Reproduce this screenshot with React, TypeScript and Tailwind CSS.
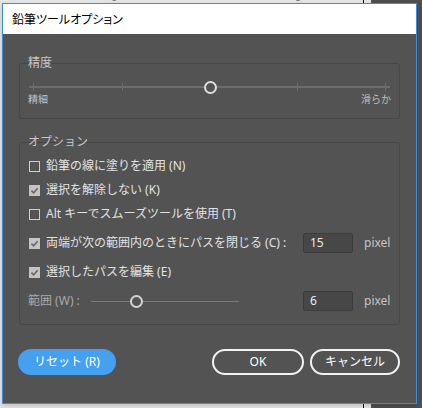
import React from "react";

function Check({ checked }: { checked: boolean }) {
  return checked ? (
    <span className="w-[11px] h-[11px] bg-[#c4c4c4] flex items-center justify-center shrink-0">
      <svg width="9" height="9" viewBox="0 0 9 9">
        <path d="M1.4 4.6 L3.6 6.8 L7.7 2.2" stroke="#6a6a6a" strokeWidth="1.7" fill="none" />
      </svg>
    </span>
  ) : (
    <span className="w-[11px] h-[11px] border border-[#cfcfcf] shrink-0" />
  );
}

function Row({ checked, label }: { checked: boolean; label: string }) {
  return (
    <div className="h-[24px] flex items-center pl-[9px] gap-[6px]">
      <Check checked={checked} />
      <span className="text-[12px] leading-[16px] text-[#e2e2e2] whitespace-nowrap">{label}</span>
    </div>
  );
}

function NumBox({ value }: { value: string }) {
  return (
    <>
      <div className="w-[50px] h-[20px] bg-[#474747] border border-[#3c3c3c] rounded-[2px] flex items-center pl-[6px] text-[12px] text-[#eaeaea] shrink-0">
        {value}
      </div>
      <span className="ml-[11px] text-[12px] text-[#c4c4c4]">pixel</span>
    </>
  );
}

export default function App() {
  return (
    <div className="relative w-[422px] h-[408px] overflow-hidden bg-[#e4e4e4] font-['Noto_Sans','Noto_Sans_CJK_JP',sans-serif]">
      {/* background: canvas strip + right panel */}
      <div className="absolute left-[363px] top-0 w-[1px] h-full bg-[#111]" />
      <div className="absolute left-[371px] top-0 w-[1px] h-full bg-[#d42020]" />
      <div className="absolute left-[372px] top-0 right-0 h-full bg-[#4e4e4e]" />
      <svg className="absolute left-0 top-0" width="363" height="4" viewBox="0 0 363 4">
        <path d="M72 -6 Q80 4 88 -6" stroke="#111" strokeWidth="2" fill="none" />
        <path d="M108 -4 Q114 3 120 -4" stroke="#111" strokeWidth="2" fill="none" />
        <path d="M165 -6 Q173 4 181 -6" stroke="#111" strokeWidth="2" fill="none" />
        <path d="M212 -6 Q220 4 228 -6" stroke="#111" strokeWidth="2" fill="none" />
        <path d="M292 -5 Q298 4 304 -5" stroke="#111" strokeWidth="2" fill="none" />
      </svg>

      {/* dialog */}
      <div className="absolute left-[2px] top-[3px] w-[415px] h-[401px] border border-[#3a8ee0] flex flex-col shadow-[0_2px_4px_rgba(0,0,0,0.15)]">
        <div className="h-[30px] bg-white flex items-center pl-[9px] shrink-0">
          <span className="text-[12px] text-black font-['Noto_Sans_CJK_JP',sans-serif] [font-feature-settings:'palt']">鉛筆ツールオプション</span>
        </div>
        <div className="flex-1 bg-[#535353] px-[16px] pt-[29px] flex flex-col">
          {/* 精度 */}
          <div className="h-[56px] border border-[#474747] rounded-[3px]">
            <div className="-mt-[9px] ml-[8px] h-[16px] leading-[16px] text-[12px] text-[#c6c6c6]">精度</div>
            <div className="relative mt-[9px] h-[14px] mx-[9px]">
              <div className="absolute left-0 right-0 top-[6px] h-[2px] bg-[#6c6c6c]" />
              <div className="absolute left-[4px] top-[3px] w-[1px] h-[8px] bg-[#6c6c6c]" />
              <div className="absolute left-[93px] top-[3px] w-[1px] h-[8px] bg-[#6c6c6c]" />
              <div className="absolute left-[268px] top-[3px] w-[1px] h-[8px] bg-[#6c6c6c]" />
              <div className="absolute left-[356px] top-[3px] w-[1px] h-[8px] bg-[#6c6c6c]" />
              <div className="absolute left-[175px] top-[1px] w-[13px] h-[13px] rounded-full border-2 border-[#dedede] bg-[#535353]" />
            </div>
            <div className="-mt-[1px] px-[8px] flex justify-between text-[10px] leading-[12px] text-[#c0c0c0]">
              <span>精細</span>
              <span>滑らか</span>
            </div>
          </div>

          {/* オプション */}
          <div className="mt-[23px] border border-[#474747] rounded-[3px] pb-[6px]">
            <div className="-mt-[9px] ml-[8px] h-[16px] leading-[16px] text-[12px] text-[#c6c6c6]">オプション</div>
            <div className="mt-[4px]">
              <Row checked={false} label="鉛筆の線に塗りを適用 (N)" />
              <Row checked={true} label="選択を解除しない (K)" />
              <Row checked={false} label="Alt キーでスムーズツールを使用 (T)" />
              <div className="h-[34px] flex items-center">
                <div className="w-[283px] flex items-center pl-[9px] gap-[6px]">
                  <Check checked={true} />
                  <span className="text-[12px] leading-[16px] text-[#e2e2e2] whitespace-nowrap">両端が次の範囲内のときにパスを閉じる (C) :</span>
                </div>
                <NumBox value="15" />
              </div>
              <Row checked={true} label="選択したパスを編集 (E)" />
              <div className="h-[34px] flex items-center">
                <div className="w-[283px] flex items-center pl-[8px]">
                  <span className="w-[63px] text-[12px] leading-[16px] text-[#a8a8a8] whitespace-nowrap">範囲 (W) :</span>
                  <div className="relative w-[148px] h-[13px]">
                    <div className="absolute left-0 right-0 top-[6px] h-[1px] bg-[#7a7a7a]" />
                    <div className="absolute left-[39px] top-0 w-[13px] h-[13px] rounded-full border-2 border-[#d4d4d4] bg-[#535353]" />
                  </div>
                </div>
                <NumBox value="6" />
              </div>
            </div>
          </div>

          {/* buttons */}
          <div className="mt-[24px] flex items-center -ml-[1px]">
            <button className="w-[98px] h-[26px] rounded-full bg-[#45a0ef] text-white text-[12px] flex items-center justify-center">
              リセット (R)
            </button>
            <div className="flex-1" />
            <button className="w-[92px] h-[26px] rounded-full border-2 border-[#f2f2f2] text-white text-[12px] flex items-center justify-center">
              OK
            </button>
            <button className="ml-[6px] w-[90px] h-[26px] rounded-full border-2 border-[#f2f2f2] text-white text-[12px] flex items-center justify-center">
              キャンセル
            </button>
          </div>
        </div>
      </div>
    </div>
  );
}
